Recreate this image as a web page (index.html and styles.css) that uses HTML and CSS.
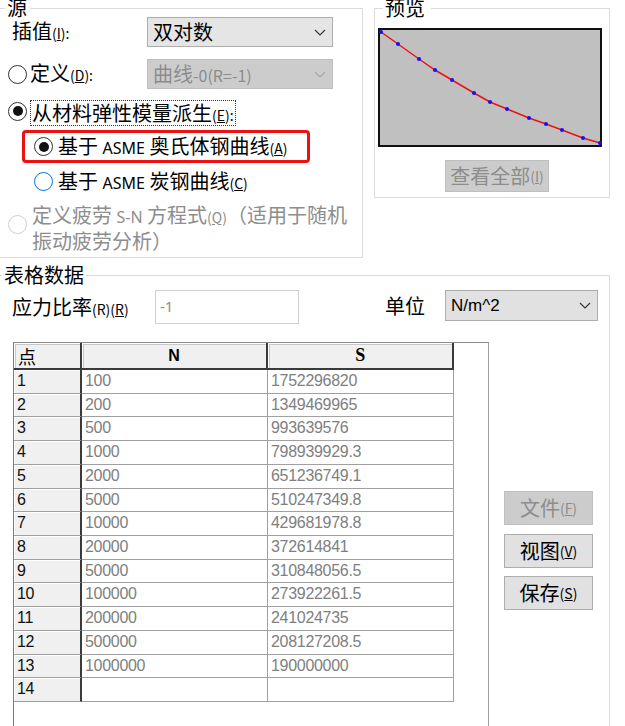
FILE: index.html
```html
<!DOCTYPE html>
<html>
<head>
<meta charset="utf-8">
<link rel="stylesheet" href="styles.css">
</head>
<body>
<div class="page">
  <div class="top">
    <fieldset class="group g-src">
      <legend class="lg-src">源</legend>
      <div class="row r1">
        <span class="lbl w1">插值<span class="acc">(<u>I</u>):</span></span>
        <div class="combo"><span class="ctext">双对数</span><svg class="chev" width="12" height="7" viewBox="0 0 12 7"><polyline points="1,1 6,6 11,1"/></svg></div>
      </div>
      <div class="row r2">
        <span class="radio"></span>
        <span class="lbl w2">定义<span class="acc">(<u>D</u>):</span></span>
        <div class="combo disabled"><span class="ctext">曲线<span class="sm">-0(R=-1)</span></span><svg class="chev" width="12" height="7" viewBox="0 0 12 7"><polyline points="1,1 6,6 11,1"/></svg></div>
      </div>
      <div class="row r3">
        <span class="radio checked"></span>
        <span class="lbl focus">从材料弹性模量派生<span class="acc">(<u>E</u>):</span></span>
      </div>
      <div class="row redbox">
        <span class="radio checked"></span>
        <span class="lbl">基于 <span class="latin">ASME</span> 奥氏体钢曲线<span class="acc">(<u>A</u>)</span></span>
      </div>
      <div class="row r5">
        <span class="radio hover"></span>
        <span class="lbl">基于 <span class="latin">ASME</span> 炭钢曲线<span class="acc">(<u>C</u>)</span></span>
      </div>
      <div class="row r6">
        <span class="radio off"></span>
        <span class="lbl dis">定义疲劳 <span class="latin">S-N</span> 方程式<span class="acc">(<u>Q</u>)</span>（适用于随机<br>振动疲劳分析）</span>
      </div>
    </fieldset>
    <fieldset class="group g-prev">
      <legend class="lg-prev">预览</legend>
      <svg class="chart" width="224" height="119" viewBox="0 0 224 119">
        <rect x="1" y="1" width="222" height="117" fill="#c0c0c0" stroke="#111" stroke-width="2"/>
        <polyline fill="none" stroke="#f01010" stroke-width="1.5" points="3,4 20,16 41,31 57,42 74,52 96,65 112,74 129,81 151,90 168,96 184,102 205,110 222,115"/>
        <g fill="#1010ff">
          <circle cx="3" cy="4" r="2"/><circle cx="20" cy="16" r="2"/><circle cx="41" cy="31" r="2"/><circle cx="57" cy="42" r="2"/><circle cx="74" cy="52" r="2"/><circle cx="96" cy="65" r="2"/><circle cx="112" cy="74" r="2"/><circle cx="129" cy="81" r="2"/><circle cx="151" cy="90" r="2"/><circle cx="168" cy="96" r="2"/><circle cx="184" cy="102" r="2"/><circle cx="205" cy="110" r="2"/><circle cx="222" cy="115" r="2"/>
        </g>
      </svg>
      <div class="btn disabled viewall">查看全部<span class="acc">(<u>I</u>)</span></div>
    </fieldset>
  </div>
  <fieldset class="group g-table">
    <legend class="lg-table">表格数据</legend>
    <div class="row trow">
      <span class="lbl w3">应力比率<span class="acc">(R)(<u>R</u>)</span></span>
      <div class="input">-1</div>
      <span class="lbl unit">单位</span>
      <div class="combo unitcombo"><span class="ctext lat">N/m^2</span><svg class="chev" width="12" height="7" viewBox="0 0 12 7"><polyline points="1,1 6,6 11,1"/></svg></div>
    </div>
    <div class="tarea">
      <div class="grid-wrap">
        <div class="grid">
          <div class="hc hc0">点</div><div class="hc hcN">N</div><div class="hc hcS">S</div>
          <div class="rh">1</div><div class="dc">100</div><div class="dc">1752296820</div>
          <div class="rh">2</div><div class="dc">200</div><div class="dc">1349469965</div>
          <div class="rh">3</div><div class="dc">500</div><div class="dc">993639576</div>
          <div class="rh">4</div><div class="dc">1000</div><div class="dc">798939929.3</div>
          <div class="rh">5</div><div class="dc">2000</div><div class="dc">651236749.1</div>
          <div class="rh">6</div><div class="dc">5000</div><div class="dc">510247349.8</div>
          <div class="rh">7</div><div class="dc">10000</div><div class="dc">429681978.8</div>
          <div class="rh">8</div><div class="dc">20000</div><div class="dc">372614841</div>
          <div class="rh">9</div><div class="dc">50000</div><div class="dc">310848056.5</div>
          <div class="rh">10</div><div class="dc">100000</div><div class="dc">273922261.5</div>
          <div class="rh">11</div><div class="dc">200000</div><div class="dc">241024735</div>
          <div class="rh">12</div><div class="dc">500000</div><div class="dc">208127208.5</div>
          <div class="rh">13</div><div class="dc">1000000</div><div class="dc">190000000</div>
          <div class="rh">14</div><div class="dc"></div><div class="dc"></div>
        </div>
      </div>
      <div class="btns">
        <div class="btn disabled b1">文件<span class="acc">(<u>F</u>)</span></div>
        <div class="btn b2">视图<span class="acc">(<u>V</u>)</span></div>
        <div class="btn b3">保存<span class="acc">(<u>S</u>)</span></div>
      </div>
    </div>
  </fieldset>
</div>
</body>
</html>
```

FILE: styles.css
```css
* { box-sizing: border-box; }
html, body { margin: 0; padding: 0; }
body {
  width: 625px;
  height: 726px;
  overflow: hidden;
  background: #fff;
  color: #000;
  font-family: "Noto Sans CJK SC", "Noto Sans", sans-serif;
  font-size: 20px;
}
.page { margin-left: -2px; }
.top { display: flex; align-items: flex-start; gap: 11px; margin-top: -2px; }

fieldset.group {
  margin: 0;
  padding: 0;
  border: 1px solid #dcdcdc;
  min-width: 0;
}
legend {
  font-size: 20px;
  line-height: 20px;
}
.lg-src { margin-left: 6px; padding: 0 3px 0 2px; }
.lg-prev { margin-left: 8px; padding: 0 6px 0 2px; }
.lg-table { margin-left: 3px; padding: 0 2px; }

.g-src { width: 365px; padding-bottom: 6px !important; }
.g-prev { width: 236px; padding-bottom: 5px !important; }

.row { display: flex; align-items: center; }
.lbl { white-space: nowrap; line-height: 22px; }
.acc { font-size: 14px; }
.sm { font-size: 16px; }
.latin { font-family: "Noto Sans", sans-serif; font-size: 16px; }

.r1 { margin-top: -1px; height: 30px; }
.w1 { margin-left: 13px; width: 135px; }
.r2 { margin-top: 12px; height: 30px; }
.r2 .radio { margin-left: 9px; }
.w2 { margin-left: 3px; width: 117px; }
.r3 { margin-top: 10px; height: 28px; }
.r3 .radio { margin-left: 9px; margin-bottom: 4px; }
.focus {
  margin-left: 3px;
  border: 1px dotted #333;
  height: 26px;
  line-height: 24px;
  padding: 0 1px;
}
.redbox {
  margin-top: 3px;
  margin-left: 23px;
  width: 288px;
  height: 33px;
  border: 3px solid #ee1111;
  border-radius: 4px;
  padding-left: 9px;
}
.redbox .lbl, .r5 .lbl { margin-left: 5px; }
.r5 { margin-top: 3px; height: 31px; }
.r5 .radio { margin-left: 35px; }
.r6 { margin-top: 6px; height: 48px; }
.r6 .radio { margin-left: 9px; margin-top: -6px; }
.r6 .lbl { margin-left: 5px; line-height: 23px; }
.dis { color: #8d8d8d; }

.radio {
  flex: none;
  width: 19px;
  height: 19px;
  border-radius: 50%;
  border: 1.6px solid #333;
  background: #fff;
  display: flex;
  align-items: center;
  justify-content: center;
}
.radio.checked::after {
  content: "";
  width: 10px;
  height: 10px;
  border-radius: 50%;
  background: #111;
}
.radio.hover { border-color: #0078d7; }
.radio.off { border-color: #cfcfcf; }

.combo {
  flex: none;
  width: 186px;
  height: 30px;
  background: #e5e5e5;
  border: 1px solid #adadad;
  display: flex;
  align-items: center;
  justify-content: space-between;
  padding: 0 6px 0 5px;
}
.ctext { line-height: 22px; }
.combo.disabled { background: #cccccc; border-color: #bfbfbf; color: #8c8c8c; }
.chev polyline { fill: none; stroke: #333; stroke-width: 1.1; }
.combo.disabled .chev polyline { stroke: #a8a8a8; }

.chart { display: block; margin: 10px 0 0 3px; }
.btn {
  display: flex;
  align-items: center;
  justify-content: center;
  background: #e1e1e1;
  border: 1px solid #adadad;
  height: 34px;
  line-height: 22px;
}
.btn.disabled { background: #cccccc; border-color: #bfbfbf; color: #8c8c8c; }
.viewall { margin: 13px 0 0 70px; width: 104px; height: 32px; }

.g-table { margin-top: 7px !important; width: 612px; height: 470px; }
.trow { margin-top: 5px; height: 34px; align-items: flex-start; }
.w3 { margin-left: 13px; width: 143px; line-height: 34px; }
.input {
  width: 144px;
  height: 34px;
  border: 1px solid #cfcfcf;
  color: #8c8c8c;
  font-family: "Noto Sans", sans-serif;
  font-size: 15px;
  line-height: 30px;
  padding-left: 4px;
}
.unit { margin-left: 86px; width: 60px; line-height: 31px; }
.unitcombo { width: 153px; height: 31px; background: #e1e1e1; }
.lat { font-family: "Liberation Sans", sans-serif; font-size: 17px; }

.tarea { display: flex; align-items: flex-start; margin-top: 18px; }
.grid-wrap {
  margin-left: 14px;
  width: 476px;
  height: 420px;
  border-left: 1px solid #7a7a7a;
  border-top: 1px solid #8a8a8a;
  border-right: 1px solid #a0a0a0;
}
.grid {
  display: grid;
  grid-template-columns: 68px 186px 186px;
  grid-template-rows: 27px repeat(14, 23.72px);
  font-family: "Liberation Sans", sans-serif;
  font-size: 16px;
  letter-spacing: -0.3px;
}
.hc {
  background: #f0f0f0;
  border-right: 2px solid #3a3a3a;
  border-bottom: 2px solid #3a3a3a;
  box-shadow: inset 1px 1px 0 #fff, inset 2px 2px 0 #c8c8c8;
  display: flex;
  align-items: center;
  justify-content: center;
  font-weight: bold;
}
.hc0 {
  justify-content: flex-start;
  padding-left: 4px;
  font-family: "Noto Sans CJK SC", sans-serif;
  font-weight: normal;
  font-size: 18px;
}
.hcS { font-family: "Liberation Serif", serif; font-size: 18px; }
.rh {
  background: #f0f0f0;
  border-right: 2px solid #3a3a3a;
  border-bottom: 1px solid #a0a0a0;
  box-shadow: inset 1px 1px 0 #fff;
  padding-left: 3px;
  line-height: 22px;
  color: #111;
}
.dc {
  border-right: 1px solid #a0a0a0;
  border-bottom: 1px solid #a0a0a0;
  color: #808080;
  padding-left: 3px;
  line-height: 22px;
}

.btns { margin: 149px 0 0 15px; display: flex; flex-direction: column; }
.btns .btn { width: 89px; }
.b2 { margin-top: 9px; }
.b3 { margin-top: 8px; }
```
